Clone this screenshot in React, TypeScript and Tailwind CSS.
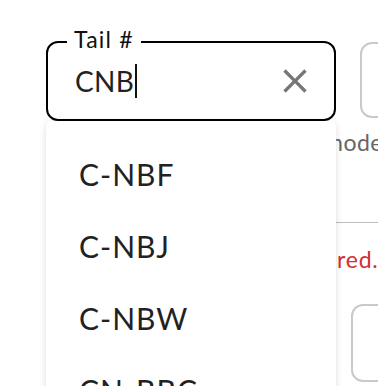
import React from "react";

const font = { fontFamily: "Lato, 'Noto Sans', sans-serif" };

export default function App() {
  const items = ["C-NBF", "C-NBJ", "C-NBW", "CN-BBC"];
  return (
    <div
      className="relative w-[378px] h-[386px] overflow-hidden bg-white flex"
      style={font}
    >
      {/* left column: Tail # field */}
      <div className="ml-[46px] w-[290px] shrink-0 pt-[41px]">
        <div className="relative h-[80px] border-2 border-black rounded-[12px] flex items-center pl-[27px] pr-[19px]">
          <span className="absolute left-[19px] -top-[16px] bg-white px-[7px] text-[23px] leading-[24px] text-[#111] tracking-[1.2px]">
            Tail #
          </span>
          <div className="flex-1 flex items-center text-[28px] leading-[36px] text-[#222] tracking-[0.3px]">
            <span>CNB</span>
            <span className="inline-block w-[2px] h-[34px] bg-[#111] ml-[1px]" />
          </div>
          <svg width="40" height="40" viewBox="0 0 24 24" className="shrink-0">
            <path
              fill="#767676"
              d="M19 6.41 17.59 5 12 10.59 6.41 5 5 6.41 10.59 12 5 17.59 6.41 19 12 13.41 17.59 19 19 17.59 13.41 12z"
            />
          </svg>
        </div>
      </div>

      {/* right column: partially visible fields */}
      <div className="flex-1 flex flex-col">
        <div className="ml-[24px] mt-[42px] h-[76px] w-[60px] border-2 border-[#c9c9c9] rounded-[12px]" />
        <div className="-ml-[12px] mt-[12px] text-[23px] leading-[24px] text-[#666] whitespace-nowrap tracking-[0.5px]">
          mode
        </div>
        <div className="mt-[68px] h-px bg-[#bdbdbd]" />
        <div className="ml-[1px] mt-[24px] text-[23px] leading-[24px] text-[#d32f2f] whitespace-nowrap tracking-[0.8px]">
          red.
        </div>
        <div className="ml-[15px] mt-[33px] h-[78px] w-[60px] border-2 border-[#c9c9c9] rounded-[12px]" />
      </div>

      {/* dropdown menu overlay */}
      <div className="absolute left-[46px] top-[121px] w-[290px] h-[300px] bg-white rounded-[6px] shadow-[0_2px_7px_rgba(0,0,0,0.14)] pt-[17px] z-10">
        {items.map((it) => (
          <div
            key={it}
            className="h-[72px] flex items-center px-[33px] text-[30px] text-[#222] tracking-[1px]"
          >
            {it}
          </div>
        ))}
      </div>
    </div>
  );
}
